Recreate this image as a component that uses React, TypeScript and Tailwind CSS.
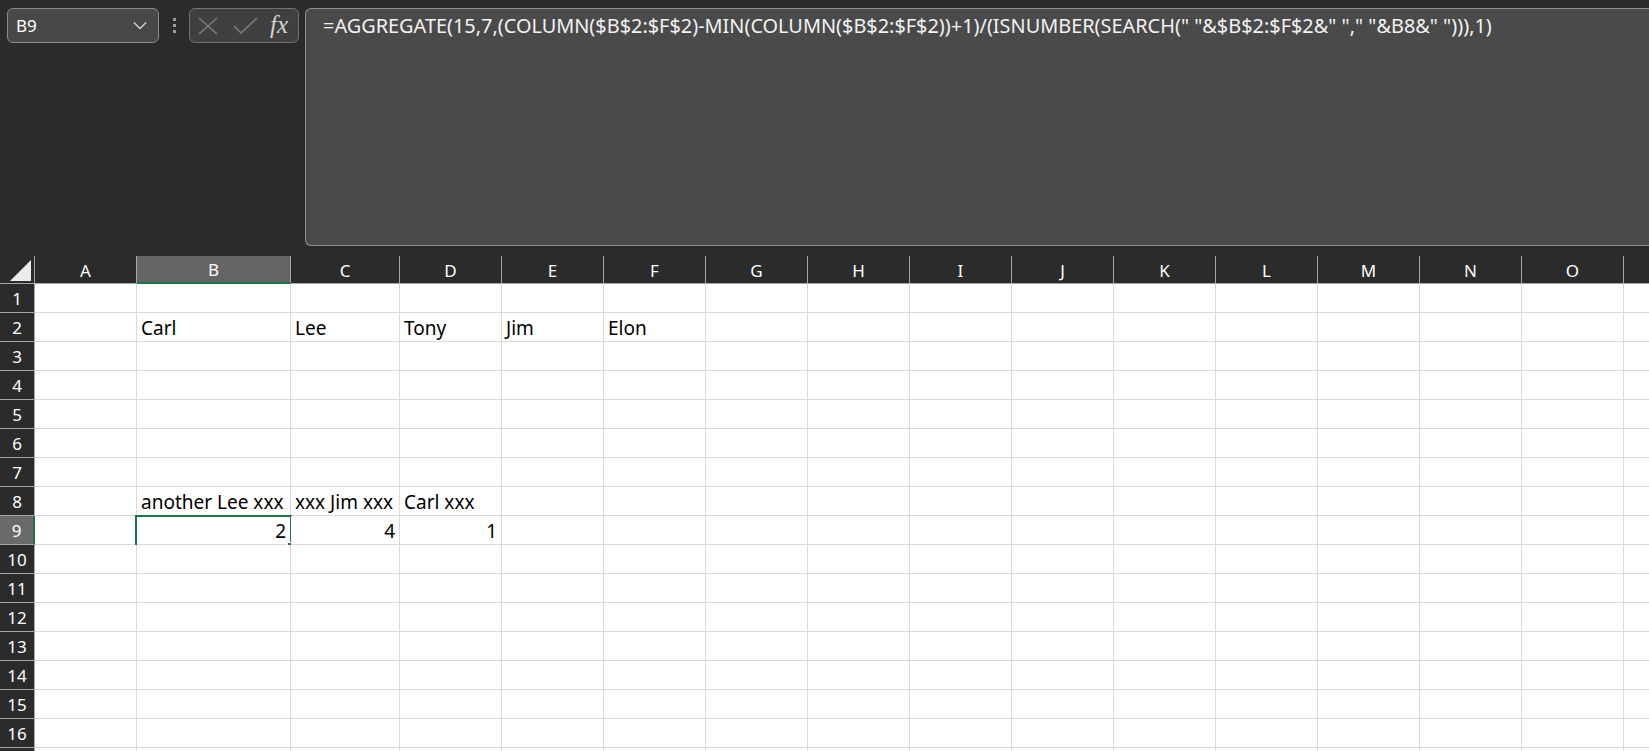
import React from "react";

const COLS = ["A", "B", "C", "D", "E", "F", "G", "H", "I", "J", "K", "L", "M", "N", "O", "P"];
const ROWS = Array.from({ length: 17 }, (_, i) => i + 1);

type CellVal = { t: string; right?: boolean };
const DATA: Record<string, CellVal> = {
  B2: { t: "Carl" },
  C2: { t: "Lee" },
  D2: { t: "Tony" },
  E2: { t: "Jim" },
  F2: { t: "Elon" },
  B8: { t: "another Lee xxx" },
  C8: { t: "xxx Jim xxx" },
  D8: { t: "Carl xxx" },
  B9: { t: "2", right: true },
  C9: { t: "4", right: true },
  D9: { t: "1", right: true },
};

const FORMULA =
  '=AGGREGATE(15,7,(COLUMN($B$2:$F$2)-MIN(COLUMN($B$2:$F$2))+1)/(ISNUMBER(SEARCH(" "&$B$2:$F$2&" "," "&B8&" "))),1)';

const font = { fontFamily: '"Noto Sans", "Open Sans", sans-serif' };

export default function App() {
  return (
    <div
      className="w-[1649px] h-[751px] overflow-hidden bg-[#2b2b2b] flex flex-col"
      style={font}
    >
      {/* Top formula area */}
      <div className="h-[256px] shrink-0 flex items-start pt-[8px]">
        <div className="ml-[7px] w-[152px] h-[35px] rounded-[6px] border border-[#8b8b8b] bg-[#484848] flex items-center justify-between pl-[8px] pr-[10px]">
          <span className="text-[17px] text-white leading-none">B9</span>
          <svg width="14" height="9" viewBox="0 0 14 9" className="mr-[1px]">
            <path d="M1 1.5 L7 7.5 L13 1.5" fill="none" stroke="#d4d4d4" strokeWidth="1.4" />
          </svg>
        </div>
        <div className="w-[30px] h-[35px] flex flex-col items-center justify-center gap-[3px]">
          <div className="w-[3px] h-[3px] bg-[#9c9c9c]" />
          <div className="w-[3px] h-[3px] bg-[#9c9c9c]" />
          <div className="w-[3px] h-[3px] bg-[#9c9c9c]" />
        </div>
        <div className="w-[110px] h-[35px] rounded-[6px] border border-[#727272] bg-[#404040] flex items-center pl-[8px]">
          <svg width="20" height="18" viewBox="0 0 20 18">
            <path d="M1 1 L19 17 M19 1 L1 17" stroke="#7c7c7c" strokeWidth="1.5" fill="none" />
          </svg>
          <svg width="26" height="18" viewBox="0 0 26 18" className="ml-[15px]">
            <path d="M1 9 L8 16 L24 1" stroke="#7c7c7c" strokeWidth="1.5" fill="none" />
          </svg>
          <span
            className="ml-[11px] text-[25px] italic text-[#d2d2d2] leading-none -mt-[3px]"
            style={{ fontFamily: '"Liberation Serif", "DejaVu Serif", serif' }}
          >
            fx
          </span>
        </div>
        <div className="ml-[6px] flex-1 h-[238px] rounded-l-[6px] border border-r-0 border-[#8f8f8f] bg-[#4a4a4a] pl-[17px] pt-[3px]">
          <div className="text-[19.9px] leading-[28px] text-[#f2f2f2] whitespace-nowrap">{FORMULA}</div>
        </div>
      </div>

      {/* Grid */}
      <div className="grid grid-cols-[35px_102px_154px_109px_repeat(13,102px)] grid-rows-[28px_repeat(17,29px)]">
        {/* header row */}
        <div className="bg-[#2b2b2b] border-r border-b border-[#a6a6a6] relative">
          <svg width="35" height="28" viewBox="0 0 35 28" className="absolute left-0 top-0">
            <polygon points="10,25 31,25 31,4" fill="#ececec" />
          </svg>
        </div>
        {COLS.map((c) => {
          const sel = c === "B";
          return (
            <div
              key={c}
              className={
                sel
                  ? "bg-[#656565] border-r border-[#a6a6a6] border-b-2 border-b-[#217346] flex items-center justify-center text-[17px] text-white"
                  : "bg-[#2b2b2b] border-r border-b border-[#a6a6a6] flex items-center justify-center text-[17px] text-white"
              }
            >
              {c !== "P" && <span className="mt-[2px]">{c}</span>}
            </div>
          );
        })}
        {ROWS.map((r) => (
          <React.Fragment key={r}>
            <div
              className={
                r === 9
                  ? "bg-[#6a6a6a] border-r-2 border-r-[#217346] border-b border-b-[#a6a6a6] flex items-center justify-center text-[17px] text-white"
                  : "bg-[#2b2b2b] border-r border-b border-[#a6a6a6] flex items-center justify-center text-[17px] text-white"
              }
            >
              {r < 17 && <span className="mt-[2px]">{r}</span>}
            </div>
            {COLS.map((c) => {
              const key = `${c}${r}`;
              const v = DATA[key];
              const selected = key === "B9";
              return (
                <div
                  key={key}
                  className={
                    "relative bg-white border-r border-b border-[#dadada] flex items-end pb-[2px] " +
                    (v?.right ? "justify-end pr-[4px]" : "pl-[4px]")
                  }
                >
                  {v && (
                    <span className="text-[19px] leading-[22px] text-black whitespace-nowrap">{v.t}</span>
                  )}
                  {selected && (
                    <>
                      <div className="absolute left-[-2px] top-[-1px] w-[157px] h-[32px] border-2 border-[#217346] pointer-events-none" />
                      <div className="absolute left-[150px] top-[26px] w-[7px] h-[7px] bg-[#217346] border border-white" />
                    </>
                  )}
                </div>
              );
            })}
          </React.Fragment>
        ))}
      </div>
    </div>
  );
}
